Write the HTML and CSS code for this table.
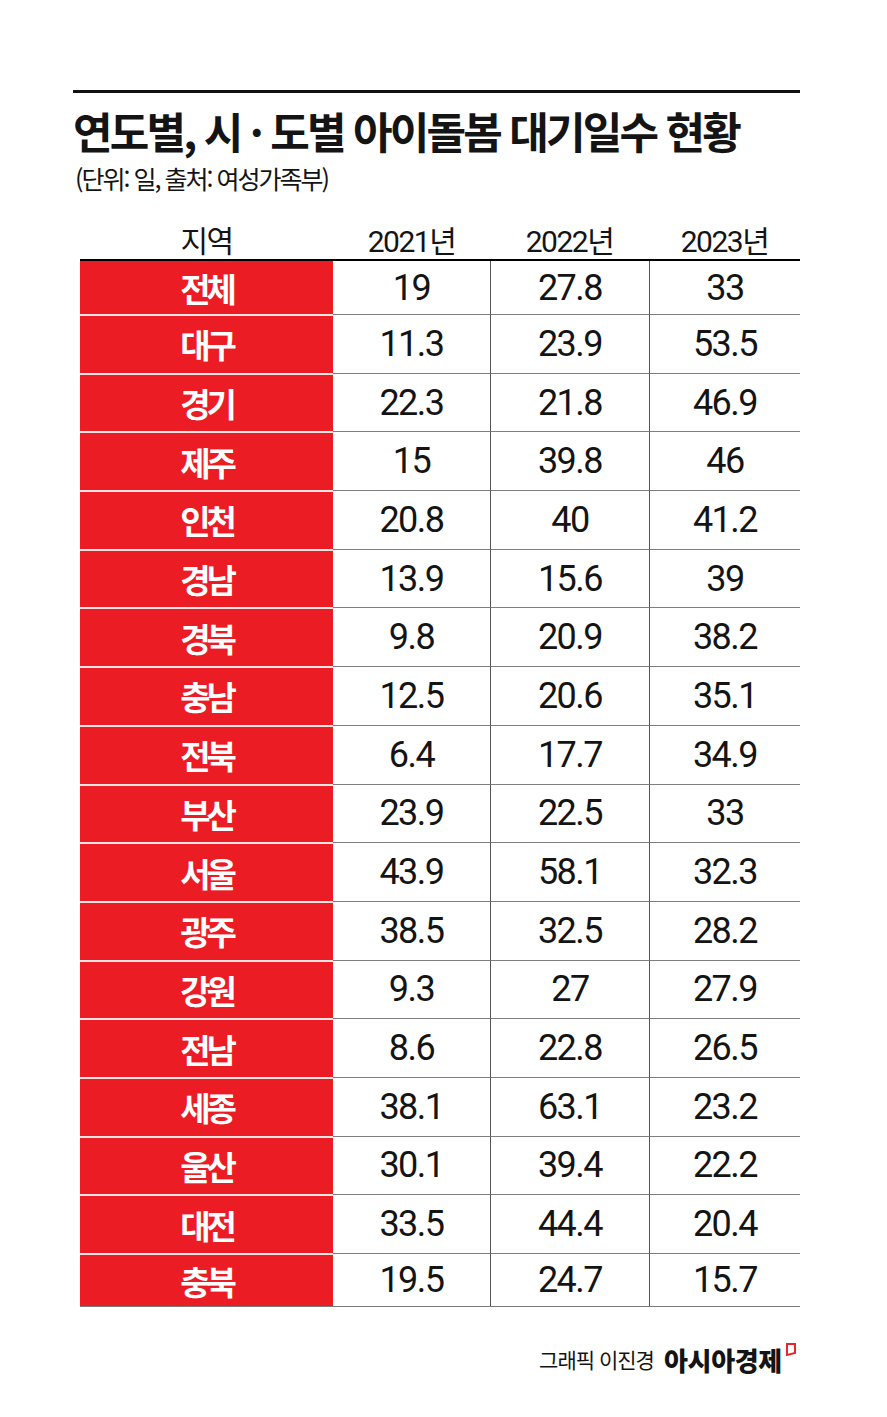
FILE: index.html
```html
<!DOCTYPE html>
<html lang="ko">
<head>
<meta charset="utf-8">
<link rel="stylesheet" href="styles.css">
</head>
<body>
<div class="page">
  <div class="rule"></div>
  <h1 class="title">연도별, 시 · 도별 아이돌봄 대기일수 현황</h1>
  <p class="sub">(단위: 일, 출처: 여성가족부)</p>
  <div class="table">
    <div class="head">
      <div class="hc">지역</div>
      <div class="hc">2021년</div>
      <div class="hc">2022년</div>
      <div class="hc">2023년</div>
    </div>
    <div class="body">
      <div class="row first"><div class="lab">전체</div><div class="c c1">19</div><div class="c">27.8</div><div class="c">33</div></div>
      <div class="row"><div class="lab">대구</div><div class="c c1">11.3</div><div class="c">23.9</div><div class="c">53.5</div></div>
      <div class="row"><div class="lab">경기</div><div class="c c1">22.3</div><div class="c">21.8</div><div class="c">46.9</div></div>
      <div class="row"><div class="lab">제주</div><div class="c c1">15</div><div class="c">39.8</div><div class="c">46</div></div>
      <div class="row"><div class="lab">인천</div><div class="c c1">20.8</div><div class="c">40</div><div class="c">41.2</div></div>
      <div class="row"><div class="lab">경남</div><div class="c c1">13.9</div><div class="c">15.6</div><div class="c">39</div></div>
      <div class="row"><div class="lab">경북</div><div class="c c1">9.8</div><div class="c">20.9</div><div class="c">38.2</div></div>
      <div class="row"><div class="lab">충남</div><div class="c c1">12.5</div><div class="c">20.6</div><div class="c">35.1</div></div>
      <div class="row"><div class="lab">전북</div><div class="c c1">6.4</div><div class="c">17.7</div><div class="c">34.9</div></div>
      <div class="row"><div class="lab">부산</div><div class="c c1">23.9</div><div class="c">22.5</div><div class="c">33</div></div>
      <div class="row"><div class="lab">서울</div><div class="c c1">43.9</div><div class="c">58.1</div><div class="c">32.3</div></div>
      <div class="row"><div class="lab">광주</div><div class="c c1">38.5</div><div class="c">32.5</div><div class="c">28.2</div></div>
      <div class="row"><div class="lab">강원</div><div class="c c1">9.3</div><div class="c">27</div><div class="c">27.9</div></div>
      <div class="row"><div class="lab">전남</div><div class="c c1">8.6</div><div class="c">22.8</div><div class="c">26.5</div></div>
      <div class="row"><div class="lab">세종</div><div class="c c1">38.1</div><div class="c">63.1</div><div class="c">23.2</div></div>
      <div class="row"><div class="lab">울산</div><div class="c c1">30.1</div><div class="c">39.4</div><div class="c">22.2</div></div>
      <div class="row"><div class="lab">대전</div><div class="c c1">33.5</div><div class="c">44.4</div><div class="c">20.4</div></div>
      <div class="row last"><div class="lab">충북</div><div class="c c1">19.5</div><div class="c">24.7</div><div class="c">15.7</div></div>
    </div>
  </div>
  <div class="footer">
    <span class="credit">그래픽 이진경</span>
    <span class="brand">아시아경제</span>
    <svg class="logo" width="12" height="16" viewBox="0 0 12 16"><path d="M2 2 H10 V11 L2 13 Z" fill="none" stroke="#e8262c" stroke-width="2" stroke-linejoin="miter"/></svg>
  </div>
</div>
</body>
</html>
```

FILE: styles.css
```css
html, body {
  margin: 0;
  padding: 0;
  background: #fff;
}

body {
  font-family: "Noto Sans CJK KR", "Noto Sans", sans-serif;
  color: #141414;
}

.page {
  width: 887px;
  height: 1417px;
  box-sizing: border-box;
  padding: 90px 87px 0 73px;
}

.rule {
  height: 3px;
  background: #111;
}

.title {
  margin: 11px 0 0 0;
  font-size: 43px;
  line-height: 52px;
  font-weight: 700;
  letter-spacing: -2.8px;
  white-space: nowrap;
}

.sub {
  margin: 5px 0 0 2px;
  font-size: 25px;
  line-height: 34px;
  font-weight: 400;
  letter-spacing: -2px;
  white-space: nowrap;
}

.table {
  margin: 18px 0 0 7px;
}

.head {
  display: grid;
  grid-template-columns: 253px 157px 159px 151px;
  height: 46px;
  align-items: center;
}

.hc {
  text-align: center;
  font-family: Roboto, "Noto Sans CJK KR", sans-serif;
  font-size: 30px;
  font-weight: 400;
  letter-spacing: -1.5px;
  padding-top: 4px;
}

.body {
  border-top: 2px solid #000;
  border-bottom: 1px solid #7a7a7a;
}

.row {
  display: grid;
  grid-template-columns: 253px 157px 159px 151px;
  height: 58.7px;
}

.row.first,
.row.last {
  height: 53px;
}

.lab {
  background: #ec1c24;
  color: #fff;
  display: flex;
  align-items: center;
  justify-content: center;
  font-size: 33px;
  font-weight: 700;
  letter-spacing: -4px;
  border-top: 2px solid #fbe4e4;
  box-sizing: border-box;
}

.c {
  display: flex;
  align-items: center;
  justify-content: center;
  font-family: Roboto, "Noto Sans", sans-serif;
  font-size: 36px;
  font-weight: 400;
  letter-spacing: -1.5px;
  border-top: 1px solid #7f7f7f;
  border-left: 1px solid #555;
  box-sizing: border-box;
}

.c.c1 {
  border-left: none;
}

.row.first .lab,
.row.first .c {
  border-top: none;
}

.footer {
  display: flex;
  align-items: center;
  justify-content: flex-end;
  margin-top: 35px;
  height: 34px;
  padding-right: 3px;
}

.credit {
  font-size: 21px;
  letter-spacing: -1px;
  font-weight: 400;
}

.brand {
  margin-left: 10px;
  font-size: 26px;
  font-weight: 900;
  letter-spacing: -0.3px;
}

.logo {
  margin-left: 3px;
  align-self: flex-start;
}
```
